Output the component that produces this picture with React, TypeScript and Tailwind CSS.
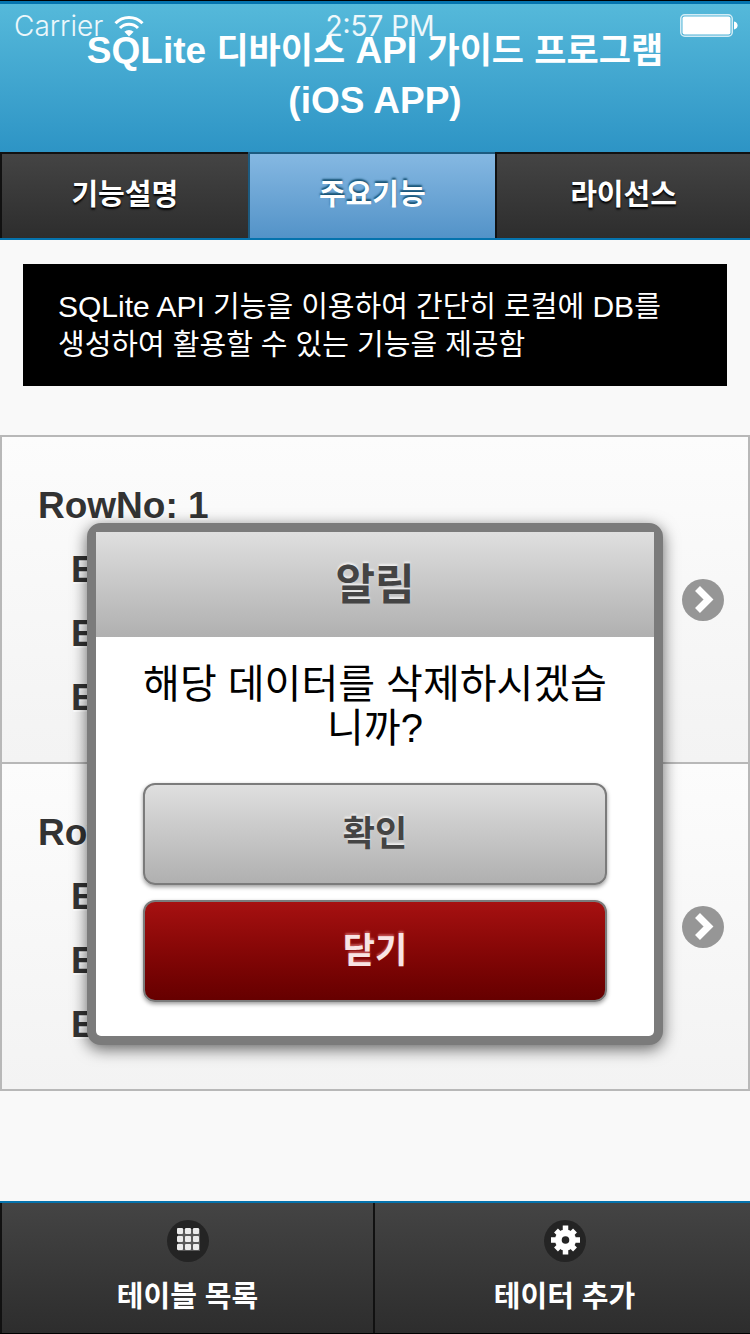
import React, { useState } from "react";

const tabs = ["기능설명", "주요기능", "라이선스"];

const rows = [
  { no: 1, items: ["E", "E", "E"] },
  { no: 2, items: ["E", "E", "E"] },
];

const WifiIcon = () => (
  <svg width="30" height="22" viewBox="0 0 30 22" fill="none" stroke="white" strokeWidth="3">
    <path d="M1.5 8.2a19 19 0 0 1 27 0" />
    <path d="M6 13a12.6 12.6 0 0 1 18 0" />
    <path d="M10.4 16.8a6.6 6.6 0 0 1 9.2 0L15 21.4z" fill="white" stroke="none" />
  </svg>
);

const BatteryIcon = () => (
  <svg width="58" height="23" viewBox="0 0 58 23">
    <rect x="0.75" y="0.75" width="51.5" height="21.5" rx="4" fill="none" stroke="white" strokeOpacity="0.75" strokeWidth="1.5" />
    <rect x="2.5" y="2.5" width="48" height="18" rx="2" fill="white" />
    <path d="M54 7.5c2.6 0.6 3.6 2.2 3.6 4s-1 3.4-3.6 4z" fill="white" />
  </svg>
);

const ArrowIcon = () => (
  <svg className="shrink-0" width="42" height="42" viewBox="0 0 42 42">
    <circle cx="21" cy="21" r="21" fill="#969696" />
    <path d="M15.5 9.5L26.5 20.5L15.5 31.5" fill="none" stroke="white" strokeWidth="7" />
  </svg>
);

const GridIcon = () => (
  <svg width="42" height="42" viewBox="0 0 42 42">
    <circle cx="21" cy="21" r="21" fill="#242424" />
    <rect x="11" y="9" width="22" height="22" fill="#5a5a5a" />
    {[10, 18, 26].map((x) =>
      [8, 16, 24].map((y) => (
        <rect key={`${x}-${y}`} x={x} y={y} width="6" height="6" rx="1" fill="#ececec" />
      ))
    )}
  </svg>
);

const GearIcon = () => (
  <svg width="42" height="42" viewBox="0 0 42 42">
    <circle cx="21" cy="21" r="21" fill="#242424" />
    <g stroke="white" strokeWidth="5.5">
      <path d="M21.5 5.5v29M7 20h29" />
      <path d="M12 10.5l19 19M31 10.5l-19 19" />
    </g>
    <circle cx="21.5" cy="20" r="10.5" fill="white" />
    <circle cx="21.5" cy="20" r="3.8" fill="#242424" />
  </svg>
);

const StatusBar = () => (
  <div className="absolute inset-x-0 top-0 z-10 grid grid-cols-3 items-center h-[51px] pl-[14px] pr-3 font-['Inter',sans-serif] text-[28px] text-white/90">
    <div className="flex items-center gap-[11px]">
      <span className="font-light">Carrier</span>
      <WifiIcon />
    </div>
    <span className="pl-2 text-center">2:57 PM</span>
    <div className="flex justify-end">
      <BatteryIcon />
    </div>
  </div>
);

const Row = ({ row }: { row: { no: number; items: string[] } }) => (
  <li>
    <a
      href="#row"
      className="flex items-center justify-between pl-9 pr-6 bg-linear-to-b from-[#fcfcfc] to-[#f3f3f3] text-[#333333] text-[37px] leading-[64px] font-bold [text-shadow:0_2px_0_#ffffff]"
    >
      <div className="pt-[37px] pb-8">
        <h2>RowNo: {row.no}</h2>
        {row.items.map((item, i) => (
          <p key={i} className="pl-[33px]">{item}</p>
        ))}
      </div>
      <ArrowIcon />
    </a>
  </li>
);

const Dialog = ({ onClose }: { onClose: () => void }) => (
  <div
    role="dialog"
    aria-labelledby="dialog-title"
    className="absolute inset-x-0 top-[523px] z-20 mx-auto w-[576px] max-w-full rounded-[14px] border-[9px] border-[#7b7b7b] bg-[#7b7b7b] shadow-[0_4px_16px_rgba(0,0,0,0.6)]"
  >
    <div className="flex h-[105px] items-center justify-center bg-linear-to-b from-[#dfdfdf] to-[#b0b0b0]">
      <h2 id="dialog-title" className="text-[43px] leading-[50px] font-bold text-[#444444] [text-shadow:0_-2px_2px_#eeeeee]">
        알림
      </h2>
    </div>
    <div className="rounded-b-[5px] bg-white px-[47px] pt-[25px] pb-[34px] text-center">
      <p className="text-[40px] leading-[44px] text-black">해당 데이터를 삭제하시겠습니까?</p>
      <div className="mt-[33px] flex flex-col gap-[15px] text-[35px] leading-[50px] font-bold">
        <button
          onClick={onClose}
          className="h-[102px] rounded-xl border-2 border-[#7b7b7b] bg-linear-to-b from-[#dfdfdf] to-[#b0b0b0] text-[#444444] shadow-[0_2px_4px_rgba(0,0,0,0.4)] [text-shadow:0_-2px_2px_#eeeeee]"
        >
          확인
        </button>
        <button
          onClick={onClose}
          className="h-[102px] rounded-xl border-2 border-[#7b7b7b] bg-linear-to-b from-[#a61111] to-[#660000] text-[#f8e4e4] shadow-[0_2px_4px_rgba(0,0,0,0.4)] [text-shadow:0_-2px_2px_#c05050]"
        >
          닫기
        </button>
      </div>
    </div>
  </div>
);

const App = () => {
  const [tab, setTab] = useState(1);
  const [open, setOpen] = useState(true);

  return (
    <div className="relative flex min-h-screen flex-col bg-[#f9f9f9] font-['Liberation_Sans','Noto_Sans_CJK_KR',sans-serif]">
      <StatusBar />
      <header className="border-t border-black">
        <div className="border-t-3 border-[#0573ad] bg-linear-to-b from-[#55b9da] to-[#2d94c5] pt-[22px] pb-[26px] text-center text-white">
          <h1 className="text-[37px] leading-[50px] font-bold">
            SQLite <span className="text-[35px]">디바이스</span> API <span className="text-[35px]">가이드</span>{" "}
            <span className="text-[35px]">프로그램</span>
            <br />
            (iOS APP)
          </h1>
        </div>
        <nav className="grid grid-cols-[33%_33%_34%] border-b-2 border-[#0573ad]">
          {tabs.map((name, i) => (
            <button
              key={name}
              onClick={() => setTab(i)}
              className={
                i === tab
                  ? "h-[86px] border-t-2 border-l-2 border-[#1d5b80] bg-linear-to-b from-[#85b8e2] to-[#5393c8] text-[29px] font-bold text-white [text-shadow:0_-2px_2px_#145072]"
                  : "h-[86px] border-t-2 border-l-2 border-[#111111] bg-linear-to-b from-[#444444] to-[#2d2d2d] text-[29px] font-bold text-white [text-shadow:0_2px_2px_#000000]"
              }
            >
              {name}
            </button>
          ))}
        </nav>
      </header>

      <main>
        <p className="mx-[23px] mt-6 mb-[49px] bg-black px-[35px] pt-6 pb-[22px] text-[30px] leading-[38px] break-keep text-white">
          SQLite API <span className="text-[29px]">기능을 이용하여 간단히 로컬에</span> DB
          <span className="text-[29px]">를 생성하여 활용할 수 있는 기능을 제공함</span>
        </p>
        <ul className="divide-y-2 divide-[#b8b8b8] border-2 border-[#b8b8b8]">
          {rows.map((row) => (
            <Row key={row.no} row={row} />
          ))}
        </ul>
      </main>

      <footer className="mt-auto grid grid-cols-2 border-t-2 border-b border-t-[#0573ad] border-b-black text-[29px] leading-9 font-bold text-white [text-shadow:0_2px_2px_#000000]">
        <button className="flex flex-col items-center gap-[17px] border-x-2 border-[#111111] bg-linear-to-b from-[#444444] to-[#2d2d2d] pt-[17px] pb-[18px]">
          <GridIcon />
          테이블 목록
        </button>
        <button onClick={() => setOpen(true)} className="flex flex-col items-center gap-[17px] bg-linear-to-b from-[#444444] to-[#2d2d2d] pt-[17px] pb-[18px] pl-1">
          <GearIcon />
          테이터 추가
        </button>
      </footer>

      {open && <Dialog onClose={() => setOpen(false)} />}
    </div>
  );
};

export default App;
